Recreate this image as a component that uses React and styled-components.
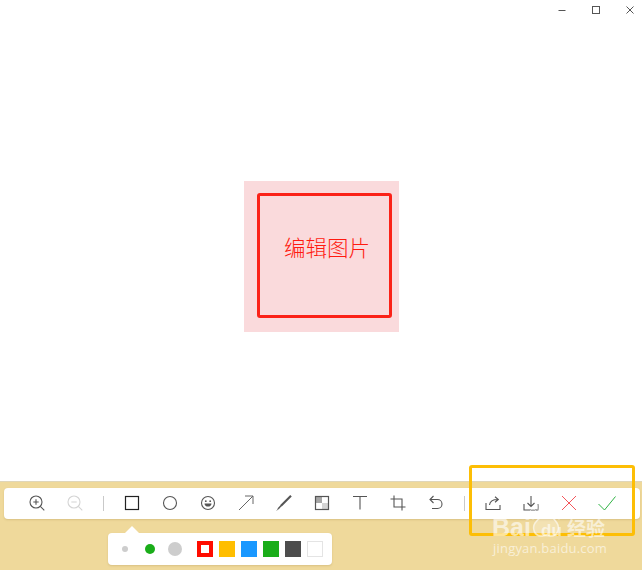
import React from 'react'
import styled, { createGlobalStyle } from 'styled-components'

const GlobalStyle = createGlobalStyle`
    html, body {
        margin: 0;
        padding: 0;
        background: #fff;
    }
    body {
        font-family: "Liberation Sans", "Noto Sans CJK SC", sans-serif;
    }
`

const Page = styled.div`
    position: relative;
    display: flex;
    flex-direction: column;
    width: 642px;
    height: 570px;
    overflow: hidden;
`

const TitleBar = styled.div`
    display: flex;
    justify-content: flex-end;
    gap: 10px;
    height: 32px;
    box-sizing: border-box;
`

const WindowButton = styled.div`
    display: flex;
    align-items: center;
    justify-content: center;
    width: 24px;
    height: 20px;
`

const Canvas = styled.div`
    flex: 1;
    display: flex;
    align-items: center;
    justify-content: center;
`

const Selection = styled.div`
    display: flex;
    width: 155px;
    height: 151px;
    box-sizing: border-box;
    padding: 12px 7px 14px 13px;
    background: #fadadc;
`

const Frame = styled.div`
    flex: 1;
    display: flex;
    align-items: center;
    justify-content: center;
    padding: 0 0 17px 6px;
    border: 3px solid #fb2218;
    border-radius: 3px;
`

const Label = styled.span`
    font-family: "Noto Sans CJK SC", sans-serif;
    font-size: 21.5px;
    font-weight: 300;
    line-height: 28px;
    color: #ff1a10;
    white-space: nowrap;
`

const Footer = styled.div`
    display: flex;
    flex-direction: column;
    height: 89px;
    box-sizing: border-box;
    padding: 6px 2px 0 4px;
    background: #efd99b;
    border-top: 1px solid #e0d6b8;
`

const Toolbar = styled.div`
    display: flex;
    align-items: center;
    height: 31px;
    padding-left: 14px;
    background: #fff;
    border-radius: 4px;
    box-shadow: 0 1px 2px rgba(150, 125, 60, 0.25);
`

const ToolButton = styled.div`
    display: flex;
    align-items: center;
    justify-content: center;
    width: 38px;
    height: 31px;
    padding-bottom: 1px;
    box-sizing: border-box;
    flex-shrink: 0;
`

const Divider = styled.div`
    width: 1px;
    height: 15px;
    margin: 0 9px;
    flex-shrink: 0;
    background: #c9c9c9;
`

const Popover = styled.div`
    position: relative;
    display: flex;
    align-items: center;
    align-self: flex-start;
    width: 224px;
    height: 32px;
    box-sizing: border-box;
    margin: 14px 0 0 104px;
    background: #fff;
    border-radius: 4px;
    box-shadow: 0 1px 2px rgba(150, 125, 60, 0.25);

    &::before {
        content: '';
        position: absolute;
        left: 17px;
        top: -7px;
        border-left: 7px solid transparent;
        border-right: 7px solid transparent;
        border-bottom: 7px solid #fff;
    }
`

const DotSlot = styled.div`
    display: flex;
    align-items: center;
    justify-content: center;
    width: 25px;
    flex-shrink: 0;
`

const DotGroup = styled.div`
    display: flex;
    margin: 0 10px 0 4px;
`

const Dot = styled.span`
    display: block;
    width: ${(p) => p.$size}px;
    height: ${(p) => p.$size}px;
    border-radius: 50%;
    background: ${(p) => p.$color};
`

const Swatches = styled.div`
    display: flex;
    gap: 6px;
`

const Swatch = styled.span`
    display: block;
    width: 16px;
    height: 16px;
    box-sizing: border-box;
    background: ${(p) => p.$color};
    border: ${(p) => p.$border || 'none'};
`

// yellow annotation drawn over the screenshot
const Highlight = styled.div`
    position: absolute;
    left: 469px;
    top: 465px;
    width: 166px;
    height: 71px;
    box-sizing: border-box;
    border: 3px solid #fdbe05;
    border-radius: 3px;
    pointer-events: none;
`

const Watermark = styled.div`
    position: absolute;
    left: 491px;
    top: 500px;
    width: 120px;
    height: 58px;
    color: rgba(255, 255, 255, 0.6);
    pointer-events: none;
`

const Paw = styled.svg`
    position: absolute;
    left: 33px;
    top: 0;
`

const BrandRow = styled.div`
    position: absolute;
    left: 1px;
    top: 15px;
    display: flex;
    align-items: baseline;
    height: 24px;
    white-space: nowrap;
`

const BrandLatin = styled.span`
    width: ${(p) => p.$width}px;
    font-size: ${(p) => p.$size}px;
    font-weight: 700;
    line-height: 24px;
`

const BrandCjk = styled.span`
    font-family: "Noto Sans CJK SC", sans-serif;
    font-size: 19px;
    font-weight: 700;
    line-height: 24px;
`

const WatermarkUrl = styled.div`
    position: absolute;
    left: 2px;
    top: 40px;
    font-family: "Open Sans", sans-serif;
    font-size: 13px;
    line-height: 16px;
    letter-spacing: 0.2px;
    white-space: nowrap;
`

const Icon = ({ children, stroke = '#555', width = 1.1 }) => (
    <svg width="20" height="20" viewBox="0 0 20 20" fill="none" stroke={stroke} strokeWidth={width}>
        {children}
    </svg>
)

const tools = [
    <Icon><circle cx="9" cy="9" r="6" /><path d="M6.3 9h5.4M9 6.3v5.4M13.3 13.3l4 4" /></Icon>,
    <Icon stroke="#d4d4d4"><circle cx="9" cy="9" r="6" /><path d="M6.3 9h5.4M13.3 13.3l4 4" /></Icon>,
    'divider',
    <Icon stroke="#222" width={1.2}><rect x="3.500" y="3.500" width="13" height="13" /></Icon>,
    <Icon><circle cx="10" cy="10" r="6.500" /></Icon>,
    <Icon>
        <circle cx="10" cy="10" r="6.500" />
        <circle cx="7.800" cy="8.200" r="0.900" fill="#555" stroke="none" />
        <circle cx="12.200" cy="8.200" r="0.900" fill="#555" stroke="none" />
        <path d="M6.500 10.400h7c0 2-1.500 3.200-3.500 3.200s-3.500-1.200-3.500-3.200z" fill="#555" stroke="none" />
    </Icon>,
    <Icon stroke="#666" width={1}><path d="M3 17L17 3M9 3h8v8" /></Icon>,
    <Icon width={2.200}><path d="M17 2.800L7 12.800" /><path d="M7.200 12.600l-3.200 3.400" strokeWidth="1.500" /><path d="M4.200 15.800l-1.400 1.700" strokeWidth="1" stroke="#888" /></Icon>,
    <Icon width={1.200}>
        <rect x="3.800" y="3.800" width="6.200" height="6.200" fill="#a6a6a6" stroke="none" />
        <rect x="10" y="10" width="6.200" height="6.200" fill="#d4d4d4" stroke="none" />
        <rect x="3.500" y="3.500" width="13" height="13" />
    </Icon>,
    <Icon><path d="M3 3.500h14M10 3.500v13" /></Icon>,
    <Icon><path d="M6 2.500V14h11.500M2.500 6H14v11.500" /></Icon>,
    <Icon><path d="M7.500 3L4 6.500 7.500 10M4 6.500h7.500a4.500 4.500 0 0 1 0 9H6" /></Icon>,
    'divider',
    <Icon><path d="M3 10v6.500h14V12" /><path d="M6.500 12c.5-3.500 3-5.500 8-5.500M12 3.800l3.300 2.700-3.300 2.700" /></Icon>,
    <Icon><path d="M3 11v6h14v-6" /><path d="M10 3v10.500M6.500 10l3.500 3.500 3.500-3.500" /></Icon>,
    <Icon stroke="#f4555a" width={1}><path d="M3 3l14 14M17 3L3 17" /></Icon>,
    <Icon stroke="#2fb344" width={1}><path d="M1.500 11l6 6L18.500 3.500" /></Icon>,
]

const dots = [
    { size: 6, color: '#cdcdcd' },
    { size: 10, color: '#1aad19' },
    { size: 14, color: '#cdcdcd' },
]

const swatches = [
    { color: '#fff', border: '4px solid #ff0c00' },
    { color: '#ffbe00' },
    { color: '#1a98ff' },
    { color: '#1aad19' },
    { color: '#4d4d4d' },
    { color: '#fff', border: '1px solid #e4e4e4' },
]

const App = () => {
    return (
        <Page>
            <GlobalStyle />
            <TitleBar>
                <WindowButton>
                    <svg width="10" height="10" viewBox="0 0 10 10" stroke="#555" fill="none"><path d="M1.500 5.500h7" /></svg>
                </WindowButton>
                <WindowButton>
                    <svg width="10" height="10" viewBox="0 0 10 10" stroke="#555" fill="none"><rect x="1.500" y="1.500" width="7" height="7" /></svg>
                </WindowButton>
                <WindowButton>
                    <svg width="10" height="10" viewBox="0 0 10 10" stroke="#555" fill="none"><path d="M1.500 1.500l7 7M8.500 1.500l-7 7" /></svg>
                </WindowButton>
            </TitleBar>
            <Canvas>
                <Selection>
                    <Frame>
                        <Label>编辑图片</Label>
                    </Frame>
                </Selection>
            </Canvas>
            <Footer>
                <Toolbar>
                    {tools.map((tool, i) =>
                        tool === 'divider' ? <Divider key={i} /> : <ToolButton key={i}>{tool}</ToolButton>
                    )}
                </Toolbar>
                <Popover>
                    <DotGroup>
                        {dots.map((dot) => (
                            <DotSlot key={dot.size}>
                                <Dot $size={dot.size} $color={dot.color} />
                            </DotSlot>
                        ))}
                    </DotGroup>
                    <Swatches>
                        {swatches.map((s, i) => (
                            <Swatch key={i} $color={s.color} $border={s.border} />
                        ))}
                    </Swatches>
                </Popover>
            </Footer>
            <Highlight />
            <Watermark>
                <Paw width="40" height="42" viewBox="0 0 40 42" fill="none" stroke="currentColor">
                    <ellipse cx="9" cy="14" rx="3.500" ry="5" />
                    <ellipse cx="17" cy="7" rx="3.500" ry="5.500" />
                    <ellipse cx="28" cy="7" rx="3.500" ry="5.500" />
                    <ellipse cx="35" cy="14" rx="3.500" ry="5" />
                    <path d="M23 15c5 0 7 4 10 8 3 5 1 13-6 13-2 0-3-.6-5-.6s-3 .6-5 .6c-7 0-9-8-6-13 3-4 7-8 12-8z" fill="currentColor" fillOpacity="0.4" strokeWidth="1.500" />
                </Paw>
                <BrandRow>
                    <BrandLatin $size={25} $width={49}>Bai</BrandLatin>
                    <BrandLatin $size={17} $width={26}>du</BrandLatin>
                    <BrandCjk>经验</BrandCjk>
                </BrandRow>
                <WatermarkUrl>jingyan.baidu.com</WatermarkUrl>
            </Watermark>
        </Page>
    )
}

export default App
